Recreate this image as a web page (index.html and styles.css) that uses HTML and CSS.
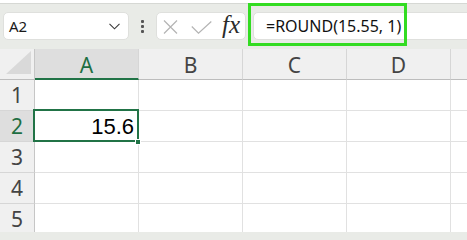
FILE: index.html
```html
<!DOCTYPE html>
<html>
<head>
<meta charset="utf-8">
<link rel="stylesheet" href="styles.css">
</head>
<body>
<div class="ribbon-edge"></div>
<div class="fbar">
  <div class="namebox">
    <span class="name">A2</span>
    <svg class="chev" width="11" height="7" viewBox="0 0 11 7"><path d="M0.5 0.8 L5.5 5.8 L10.5 0.8" fill="none" stroke="#3a3a3a" stroke-width="1.1"/></svg>
  </div>
  <div class="grip"><span></span><span></span><span></span></div>
  <div class="btnbox">
    <svg class="xbtn" width="15" height="14" viewBox="0 0 15 14"><path d="M1 0.5 L14 13.5 M14 0.5 L1 13.5" stroke="#b4b4b4" stroke-width="1.2" fill="none"/></svg>
    <svg class="okbtn" width="21" height="13" viewBox="0 0 21 13"><path d="M0.8 5.5 L7.5 12.2 L20.3 0.5" stroke="#b4b4b4" stroke-width="1.2" fill="none"/></svg>
    <span class="fx">fx</span>
  </div>
  <div class="formula">
    <span class="ftext">=ROUND(15.55, 1)</span>
    <div class="highlight"></div>
  </div>
</div>
<div class="sheet">
  <div class="corner"><svg width="25" height="23" viewBox="0 0 25 23"><polygon points="25,0 25,23 0,23" fill="#d9d9d9"/></svg></div>
  <div class="colhead sel">A</div>
  <div class="colhead">B</div>
  <div class="colhead">C</div>
  <div class="colhead">D</div>
  <div class="colhead last"></div>

  <div class="rowhead">1</div>
  <div class="cell"></div><div class="cell"></div><div class="cell"></div><div class="cell"></div><div class="cell last"></div>

  <div class="rowhead sel">2</div>
  <div class="cell active"><span class="val">15.6</span><i class="handle"></i></div><div class="cell"></div><div class="cell"></div><div class="cell"></div><div class="cell last"></div>

  <div class="rowhead">3</div>
  <div class="cell"></div><div class="cell"></div><div class="cell"></div><div class="cell"></div><div class="cell last"></div>

  <div class="rowhead">4</div>
  <div class="cell"></div><div class="cell"></div><div class="cell"></div><div class="cell"></div><div class="cell last"></div>

  <div class="rowhead">5</div>
  <div class="cell"></div><div class="cell"></div><div class="cell"></div><div class="cell"></div><div class="cell last"></div>
</div>
</body>
</html>
```
FILE: styles.css
```css
* { box-sizing: border-box; }
html, body { margin: 0; padding: 0; }
body {
  width: 467px;
  height: 232px;
  overflow: hidden;
  background: #e9ebe7;
  font-family: "Noto Sans", "Open Sans", sans-serif;
  color: #222;
}
.ribbon-edge {
  height: 4px;
  background: #ffffff;
  border-bottom: 1px solid #d6d8d4;
}
.fbar {
  height: 45px;
  display: flex;
  align-items: flex-start;
  padding: 8px 0 0 3px;
}
.namebox {
  width: 126px;
  height: 28px;
  background: #fff;
  border: 1px solid #dfe0dd;
  border-radius: 5px;
  display: flex;
  align-items: center;
  justify-content: space-between;
  padding: 0 8px 0 5px;
}
.name {
  font-size: 15px;
  color: #1a1a1a;
}
.chev { margin-top: 1px; }
.grip {
  width: 27px;
  height: 28px;
  display: flex;
  flex-direction: column;
  align-items: center;
  justify-content: center;
  gap: 2px;
}
.grip span {
  width: 3px;
  height: 3px;
  background: #555;
  border-radius: 1px;
}
.btnbox {
  width: 90px;
  height: 28px;
  background: #fff;
  border: 1px solid #dfe0dd;
  border-radius: 5px;
  display: flex;
  align-items: center;
  padding-left: 6px;
}
.xbtn { margin-top: 2px; }
.okbtn { margin-left: 13px; margin-top: 2px; }
.fx {
  margin-left: 10px;
  font-family: "Liberation Serif", "DejaVu Serif", serif;
  font-style: italic;
  font-size: 25px;
  line-height: 1;
  color: #2b2b2b;
  margin-top: -3px;
}
.formula {
  position: relative;
  flex: 1;
  height: 28px;
  margin-left: 7px;
  margin-right: -10px;
  background: #fff;
  border: 1px solid #dfe0dd;
  border-radius: 5px;
  display: flex;
  align-items: center;
  padding-left: 12px;
}
.ftext {
  font-size: 16px;
  color: #111;
}
.highlight {
  position: absolute;
  left: -6px;
  top: -10px;
  width: 159px;
  height: 43px;
  border: 3px solid #33dc22;
}
.sheet {
  display: grid;
  grid-template-columns: 35px repeat(4, 104px) 1fr;
  grid-template-rows: 31px repeat(5, 31px);
  background: #fff;
}
.corner {
  background: #f0f0f0;
  border-right: 1px solid #c6c6c6;
  border-bottom: 1px solid #bdbdbd;
  display: flex;
  align-items: flex-end;
  justify-content: flex-end;
  padding: 0 3px 5px 0;
}
.colhead {
  background: #f0f0f0;
  border-right: 1px solid #d6d6d6;
  border-bottom: 1px solid #bdbdbd;
  display: flex;
  align-items: center;
  justify-content: center;
  font-size: 21px;
  color: #444;
  padding-top: 2px;
}
.colhead.sel {
  background: #dedede;
  color: #1e6e42;
  border-bottom: 2px solid #217346;
}
.colhead.last { border-right: none; }
.rowhead {
  background: #f0f0f0;
  border-right: 1px solid #c6c6c6;
  border-bottom: 1px solid #d6d6d6;
  display: flex;
  align-items: center;
  justify-content: center;
  font-size: 21px;
  color: #444;
}
.rowhead.sel {
  background: #dedede;
  color: #1e6e42;
}
.cell {
  border-right: 1px solid #e1e1e1;
  border-bottom: 1px solid #e1e1e1;
  position: relative;
}
.cell.last { border-right: none; }
.cell.active {
  display: flex;
  align-items: center;
  justify-content: flex-end;
  padding-right: 4px;
}
.cell.active::after {
  content: "";
  position: absolute;
  left: -2px;
  top: -2px;
  right: -1px;
  bottom: -1px;
  border: 2px solid #217346;
}
.val {
  font-family: "Liberation Sans", Arial, sans-serif;
  font-size: 22px;
  color: #000;
  margin-top: 2px;
}
.handle {
  position: absolute;
  right: -3px;
  bottom: -4px;
  width: 6px;
  height: 6px;
  background: #217346;
  border: 1px solid #fff;
  z-index: 2;
}
```
